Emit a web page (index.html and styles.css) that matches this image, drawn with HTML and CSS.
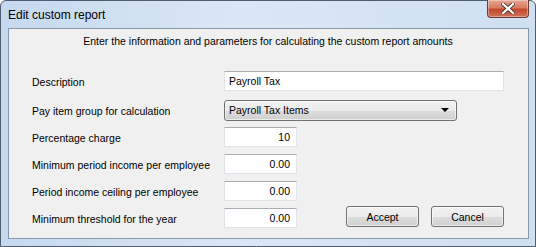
FILE: index.html
```html
<!DOCTYPE html>
<html lang="en">
<head>
    <meta charset="UTF-8">
    <meta name="viewport" content="width=device-width, initial-scale=1.0">
    <title>Edit custom report</title>
    <link rel="stylesheet" href="styles.css">
</head>
<body>
    <div class="window">
        <div class="titlebar">
            <span class="title">Edit custom report</span>
            <button class="close-btn" aria-label="Close">
                <svg width="14" height="11" viewBox="0 0 14 11">
                    <path d="M2 1 L12 10 M12 1 L2 10" stroke="#5a3a36" stroke-width="4" stroke-linecap="square"/>
                    <path d="M2 1 L12 10 M12 1 L2 10" stroke="#fff" stroke-width="2.2" stroke-linecap="square"/>
                </svg>
            </button>
        </div>

        <div class="client">
            <p class="intro">Enter the information and parameters for calculating the custom report amounts</p>

            <div class="form">
                <div class="row row-desc">
                    <label class="label">Description</label>
                    <input class="field wide" type="text" value="Payroll Tax">
                </div>
                <div class="row">
                    <label class="label">Pay item group for calculation</label>
                    <div class="select">
                        <span>Payroll Tax Items</span>
                        <span class="arrow"></span>
                    </div>
                </div>
                <div class="row">
                    <label class="label">Percentage charge</label>
                    <input class="field num" type="text" value="10">
                </div>
                <div class="row">
                    <label class="label">Minimum period income per employee</label>
                    <input class="field num" type="text" value="0.00">
                </div>
                <div class="row">
                    <label class="label">Period income ceiling per employee</label>
                    <input class="field num" type="text" value="0.00">
                </div>
                <div class="row">
                    <label class="label">Minimum threshold for the year</label>
                    <input class="field num" type="text" value="0.00">
                    <div class="actions">
                        <button class="btn">Accept</button>
                        <button class="btn">Cancel</button>
                    </div>
                </div>
            </div>
        </div>
    </div>
</body>
</html>
```

FILE: styles.css
```css
* {
    margin: 0;
    padding: 0;
    box-sizing: border-box;
}

body {
    font-family: 'Liberation Sans', Arial, sans-serif;
    font-size: 10.5px;
    color: #000;
    background-color: #fff;
}

.window {
    width: 536px;
    height: 247px;
    border: 1px solid #4f5d6e;
    border-radius: 6px 6px 0 0;
    background: linear-gradient(to right, #c6d9ef 0%, #dae7f5 45%, #cfe0f3 100%);
    display: flex;
    flex-direction: column;
    padding: 0 6px 7px 7px;
}

.titlebar {
    height: 27px;
    display: flex;
    align-items: flex-start;
    justify-content: space-between;
}

.title {
    font-size: 12px;
    margin-top: 7px;
}

.close-btn {
    width: 42px;
    height: 18px;
    margin-top: -1px;
    border: 1px solid #6b3a33;
    border-top: none;
    border-radius: 0 0 4px 4px;
    background: linear-gradient(to bottom, #e5a792 0%, #d67c62 45%, #c24a2c 55%, #d1705a 100%);
    display: flex;
    align-items: center;
    justify-content: center;
    box-shadow: inset 0 0 0 1px rgba(255, 255, 255, 0.35);
}

.client {
    flex: 1;
    background-color: #f0f0f0;
    border: 1px solid #8799ad;
    padding: 0 24px 0 23px;
}

.intro {
    text-align: center;
    margin-top: 6px;
    line-height: 13px;
}

.form {
    margin-top: 23px;
    display: flex;
    flex-direction: column;
    gap: 7px;
}

.row {
    display: flex;
    align-items: center;
    height: 20px;
}

.row-desc {
    margin-bottom: 2px;
}

.label {
    width: 192px;
    flex-shrink: 0;
    padding-top: 2px;
}

.field {
    height: 20px;
    font-family: inherit;
    font-size: 10.5px;
    border: 1px solid #e2e3ea;
    border-top-color: #abadb3;
    background-color: #fff;
    padding: 0 4px;
    outline: none;
}

.field.wide {
    width: 280px;
}

.field.num {
    width: 73px;
    text-align: right;
    padding-right: 6px;
}

.select {
    width: 233px;
    height: 21px;
    border: 1px solid #707070;
    border-radius: 3px;
    background: linear-gradient(to bottom, #f2f2f2 0%, #ebebeb 50%, #dddddd 51%, #cfcfcf 100%);
    display: flex;
    align-items: center;
    justify-content: space-between;
    padding: 0 7px 0 4px;
    box-shadow: inset 0 0 0 1px rgba(255, 255, 255, 0.6);
}

.arrow {
    width: 0;
    height: 0;
    border-left: 4px solid transparent;
    border-right: 4px solid transparent;
    border-top: 4px solid #000;
}

.actions {
    margin-left: auto;
    display: flex;
    gap: 12px;
    margin-top: -3px;
}

.btn {
    width: 73px;
    height: 21px;
    font-family: inherit;
    font-size: 10.5px;
    border: 1px solid #707070;
    border-radius: 3px;
    background: linear-gradient(to bottom, #f2f2f2 0%, #ebebeb 50%, #dddddd 51%, #cfcfcf 100%);
    box-shadow: inset 0 0 0 1px rgba(255, 255, 255, 0.6);
    color: #000;
}
```
